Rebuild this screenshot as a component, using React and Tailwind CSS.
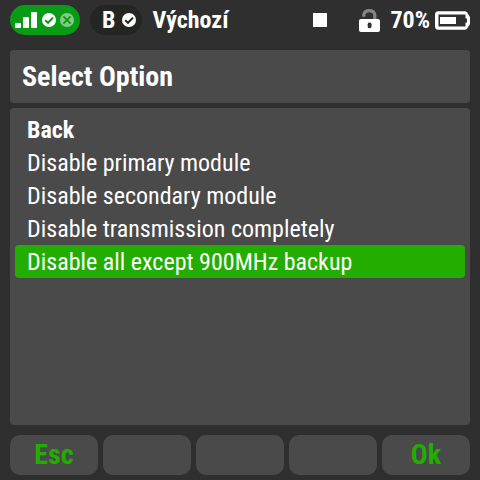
import React, { useState } from "react";

const options = [
  { label: "Back", bold: true },
  { label: "Disable primary module" },
  { label: "Disable secondary module" },
  { label: "Disable transmission completely" },
  { label: "Disable all except 900MHz backup" },
];

const softKeys = ["Esc", "", "", "", "Ok"];

const SignalIcon = () => (
  <svg width="23" height="16" viewBox="0 0 23 16" fill="#fff" aria-hidden="true">
    <rect x="0" y="11" width="6" height="5" rx="1" />
    <rect x="8" y="5" width="6" height="11" rx="1" />
    <rect x="16" y="0" width="6" height="16" rx="1" />
  </svg>
);

const CheckIcon = ({ mark }) => (
  <svg width="14" height="14" viewBox="0 0 14 14" aria-hidden="true">
    <circle cx="7" cy="7" r="7" fill="#fff" />
    <path d="M3.2 7.2 6 9.8 11 4.6" fill="none" stroke={mark} strokeWidth="2" />
  </svg>
);

const CrossIcon = () => (
  <svg width="14" height="14" viewBox="0 0 14 14" aria-hidden="true">
    <circle cx="7" cy="7" r="7" fill="#83cb87" />
    <path d="M3.4 3.4 10.6 10.6M10.6 3.4 3.4 10.6" stroke="#089c16" strokeWidth="1.8" />
  </svg>
);

const UnlockIcon = () => (
  <svg width="21" height="24" viewBox="0 0 21 24" aria-hidden="true">
    <path d="M4.8 8.8V6.6A5.6 4.9 0 0 1 15.8 6.6V12" fill="none" stroke="#858585" strokeWidth="3.2" />
    <rect x="0" y="11" width="21" height="13" rx="2" fill="#fff" />
    <rect x="8.7" y="14.6" width="3.8" height="5.6" rx="1.6" fill="#2f2f2f" />
  </svg>
);

const BatteryIcon = () => (
  <svg width="35" height="19" viewBox="0 0 35 19" aria-hidden="true">
    <path
      d="M3 0.3H30Q32.5 0.5 33 3L34.2 4.5Q35 5.5 35 7V12Q35 13.5 34.2 14.5L33 16Q32.5 18.5 30 18.7H3Q0 18.5 0 15.5V3.5Q0 0.5 3 0.3Z"
      fill="#fff"
    />
    <path d="M3.5 3.6H30.5V7.5H32V11.5H30.5V15.4H3.5Z" fill="#2f2f2f" />
    <rect x="5" y="6" width="16" height="7" fill="#fff" />
  </svg>
);

const App = () => {
  const [selected, setSelected] = useState(4);

  return (
    <div className="flex min-h-screen flex-col bg-[#2f2f2f] px-[10px] pt-[5px] pb-[5px] font-['Roboto_Condensed','Roboto',sans-serif] text-2xl text-white">
      {/* Status bar */}
      <header className="flex h-[30px] items-center justify-between font-bold">
        <div className="flex items-center gap-[10px]">
          <div className="flex h-[30px] items-center gap-1 rounded-full bg-[#089c16] pr-[6px] pl-[5px]">
            <SignalIcon />
            <CheckIcon mark="#089c16" />
            <CrossIcon />
          </div>
          <div className="flex h-[30px] items-center gap-[7px] rounded-full bg-[#232623] pr-[6px] pl-3">
            <span>B</span>
            <CheckIcon mark="#232623" />
          </div>
          <span>Výchozí</span>
        </div>
        <div className="flex items-center">
          <span className="mr-8 h-[14px] w-[14px] bg-white" />
          <UnlockIcon />
          <span className="mr-[5px] ml-[10px]">70%</span>
          <BatteryIcon />
        </div>
      </header>

      <h1 className="mt-[15px] rounded bg-[#4a4a4a] px-3 py-[10px] text-[28px] leading-[33px] font-bold">
        Select Option
      </h1>

      {/* Option list */}
      <ul className="mt-[5px] flex-1 rounded bg-[#4a4a4a] p-[5px]">
        {options.map((option, index) => (
          <li key={option.label}>
            <button
              type="button"
              onClick={() => setSelected(index)}
              className={`block w-full rounded px-3 pt-[2px] text-left leading-[31px] ${
                option.bold ? "font-bold" : "font-normal"
              } ${selected === index ? "bg-[#22ad00]" : ""}`}
            >
              {option.label}
            </button>
          </li>
        ))}
      </ul>

      {/* Soft keys */}
      <footer className="mt-[10px] grid grid-cols-5 gap-[5px]">
        {softKeys.map((key, index) => (
          <button
            key={index}
            type="button"
            aria-label={key || `Key ${index + 1}`}
            className="h-10 rounded-[10px] bg-[#4a4a4a] text-[28px] leading-10 font-bold text-[#22ad00]"
          >
            {key}
          </button>
        ))}
      </footer>
    </div>
  );
};

export default App;
